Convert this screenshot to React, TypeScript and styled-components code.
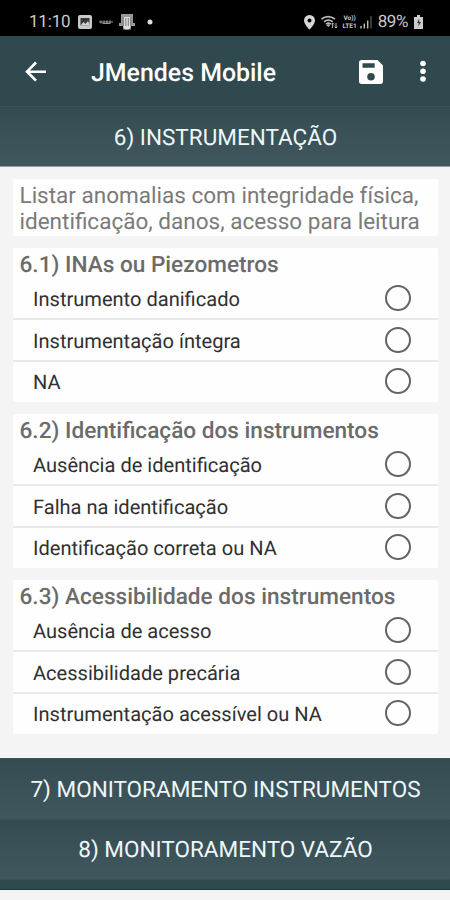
import React from 'react';
import styled, { createGlobalStyle } from 'styled-components';

const GlobalStyle = createGlobalStyle`
  * { box-sizing: border-box; }
  html, body { margin: 0; padding: 0; background: #f4f4f4; }
  body { font-family: Roboto, "Liberation Sans", sans-serif; text-rendering: geometricPrecision; }
`;

const Screen = styled.div`
  width: 450px;
  height: 900px;
  overflow: hidden;
  display: flex;
  flex-direction: column;
  background: #f4f4f4;
`;

const StatusBar = styled.header`
  height: 36px;
  flex: none;
  display: flex;
  justify-content: space-between;
  padding: 8px 27px 0 29px;
  background: #000;
  color: #c9c9c9;
`;

const StatusGroup = styled.div`
  display: flex;
  align-items: center;
  height: 28px;
`;

const StatusText = styled.span<{ $spacing: number }>`
  font-size: 17px;
  line-height: 28px;
  letter-spacing: ${(p) => p.$spacing}px;
  white-space: nowrap;
`;

const StatusIcon = styled.svg<{ $gap: number }>`
  display: block;
  flex: none;
  margin-left: ${(p) => p.$gap}px;
`;

const Battery = styled.span`
  margin-left: 6px;
`;

const AppBar = styled.div`
  height: 70px;
  flex: none;
  display: flex;
  align-items: center;
  padding: 1px 22px 0 24px;
  background: #30494f;
  color: #fff;
`;

const Title = styled.h1`
  flex: 1;
  margin: 3px 0 0 43px;
  font-size: 24.9px;
  font-weight: 500;
  white-space: nowrap;
`;

const BarIcon = styled.svg<{ $gap?: number }>`
  display: block;
  flex: none;
  margin-left: ${(p) => p.$gap ?? 0}px;
`;

const SectionButton = styled.button<{ $height: number; $drop: number }>`
  display: block;
  width: 100%;
  height: ${(p) => p.$height}px;
  flex: none;
  margin: 0;
  padding: ${(p) => p.$drop}px 0 0 1px;
  border: 0;
  border-top: 1px solid #3b545a;
  background: linear-gradient(#334c52, #40575d);
  color: #eef7fb;
  font: 400 22.5px Roboto, "Liberation Sans", sans-serif;
  text-rendering: inherit;
  text-align: center;
  white-space: nowrap;
`;

const Content = styled.main`
  flex: none;
  height: 592px;
  display: flex;
  flex-direction: column;
  gap: 11.5px;
  padding: 12px 12px 0 13px;
  border-top: 1px solid #8fa1a5;
`;

const Card = styled.section`
  flex: none;
  background: #fefefe;
  border-radius: 2px;
`;

const Description = styled(Card)`
  height: 57px;
  padding: 4px 0 0 6.5px;
  font-size: 22.52px;
  line-height: 26px;
  color: #7a7a7a;
`;

const DescriptionLine = styled.div`
  white-space: nowrap;
`;

const Question = styled(Card)`
  height: 154.5px;
`;

const QuestionTitle = styled.h2`
  height: 31px;
  margin: 0;
  padding-left: 6.5px;
  font-size: 22.62px;
  line-height: 34px;
  font-weight: 500;
  color: #6b6b6b;
  white-space: nowrap;
`;

const Option = styled.label`
  height: 41.5px;
  display: flex;
  align-items: center;
  justify-content: space-between;
  padding: 0 27px 0 20px;
  border-bottom: 2px solid #e9e9e9;

  &:last-child { border-bottom-color: transparent; }
`;

const OptionText = styled.span`
  padding-top: 1.5px;
  font-size: 20.07px;
  line-height: 24px;
  color: #303030;
  white-space: nowrap;
`;

const Radio = styled.span`
  width: 26px;
  height: 26px;
  flex: none;
  border: 2px solid #646464;
  border-radius: 50%;
`;

const Footer = styled.div`
  height: 11px;
  flex: none;
  background: #30494f;
  border-top: 1px solid #3b545a;
  border-bottom: 1px solid #173b42;
`;

const VolteText = styled.span`
  display: flex;
  flex-direction: column;
  margin-left: 3px;
  width: 18px;
  font-size: 6.5px;
  font-weight: 700;
  line-height: 8px;
  text-align: center;
  white-space: nowrap;
`;

type Group = { title: string; options: string[] };

const groups: Group[] = [
  {
    title: '6.1) INAs ou Piezometros',
    options: ['Instrumento danificado', 'Instrumentação íntegra', 'NA'],
  },
  {
    title: '6.2) Identificação dos instrumentos',
    options: ['Ausência de identificação', 'Falha na identificação', 'Identificação correta ou NA'],
  },
  {
    title: '6.3) Acessibilidade dos instrumentos',
    options: ['Ausência de acesso', 'Acessibilidade precária', 'Instrumentação acessível ou NA'],
  },
];

export default function App() {
  return (
    <Screen>
      <GlobalStyle />
      <StatusBar>
        <StatusGroup>
          <StatusText $spacing={-0.2}>11:10</StatusText>
          <StatusIcon $gap={8} width="14" height="14" viewBox="0 0 14 14">
            <rect width="14" height="14" rx="2" fill="#c9c9c9" />
            <rect x="2.5" y="3" width="9" height="7.5" fill="#383838" />
            <path d="M2.5 10.5 5.5 7l2 2L10 6l2 4.5z" fill="#d4d4d4" />
          </StatusIcon>
          <StatusIcon $gap={7} width="14" height="6" viewBox="0 0 14 6">
            <path d="M0 3h14M2 1.2v3.2M5 1.5v3M8 1.2v3.3M11 1.3v3M3.5 4.5h8" stroke="#929292" strokeWidth="1.2" fill="none" />
          </StatusIcon>
          <StatusIcon $gap={6} width="16" height="16" viewBox="0 0 16 16">
            <path d="M2 0h12v9h2v3h-4v3.5H4V12H0V9h2z" fill="#999" />
            <path d="M4.5 3h7v10l-2 2.5H6L4.5 13z" fill="#dedede" />
            <path d="M4.2 3v9M11.8 3v9M6.8 4v8M9.3 4v8" stroke="#606060" strokeWidth=".8" />
          </StatusIcon>
          <StatusIcon $gap={12} width="6" height="6" viewBox="0 0 6 6">
            <circle cx="3" cy="3" r="2.5" fill="#ddd" />
          </StatusIcon>
        </StatusGroup>
        <StatusGroup>
          <StatusIcon $gap={0} width="11" height="15" viewBox="0 0 11 15">
            <path fillRule="evenodd" d="M5.5 0A5.4 5.4 0 0 0 0 5.4C0 9.3 5.5 14.5 5.5 14.5S11 9.3 11 5.4A5.4 5.4 0 0 0 5.5 0m0 3.6a2 2 0 1 1 0 4 2 2 0 0 1 0-4" fill="#d5d5d5" />
          </StatusIcon>
          <StatusIcon $gap={6} width="17" height="14" viewBox="0 0 17 14">
            <path d="M.5 4Q7 -.8 14 4M3 6.7q4.2-3 8.7 0M5 9.2q2.4-2 4.7 0" fill="none" stroke="#b9b9b9" strokeWidth="1.7" />
            <path d="m7.3 12-2-2q2-1.5 4 0z" fill="#b9b9b9" />
            <path d="M11.6 8v5m-1.5-3.5L11.6 8l1.5 1.5M15 13V8m-1.5 3.5L15 13l1.5-1.5" stroke="#b9b9b9" fill="none" />
          </StatusIcon>
          <VolteText>
            <span>Vo))</span>
            <span>LTE1</span>
          </VolteText>
          <StatusIcon $gap={1} width="12" height="14" viewBox="0 0 12 14">
            <path d="M1 11v2.5M4.3 8.5v5M7.7 5.5v8" stroke="#b8b8b8" strokeWidth="1.5" />
            <path d="M11 1v12.5" stroke="#555" strokeWidth="1.3" />
          </StatusIcon>
          <Battery>
            <StatusText $spacing={-0.4}>89%</StatusText>
          </Battery>
          <StatusIcon $gap={6} width="9" height="14" viewBox="0 0 9 14">
            <path d="M3 0h3v2h3v12H0V2h3z" fill="#ccc" />
            <path d="M5.2 3.8 3 8h1.7l-.5 3.5L7 7H5.2z" fill="#303030" />
          </StatusIcon>
        </StatusGroup>
      </StatusBar>

      <AppBar>
        <BarIcon width="24" height="24" viewBox="0 0 24 24" aria-label="Voltar">
          <path d="M22 11.7H3.5M12 2.5 3 11.7l9 9" fill="none" stroke="#fff" strokeWidth="2.6" />
        </BarIcon>
        <Title>JMendes Mobile</Title>
        <BarIcon width="24" height="24" viewBox="0 0 24 24" aria-label="Salvar">
          <path fillRule="evenodd" d="M2.8 0H18.5L24 5.5v15.8A2.7 2.7 0 0 1 21.3 24H2.8A2.8 2.8 0 0 1 0 21.2V2.8A2.8 2.8 0 0 1 2.8 0M3.5 3.2v4.6h12.2V3.2zM12 13a3.8 3.8 0 1 0 0 7.6 3.8 3.8 0 0 0 0-7.6" fill="#fff" />
        </BarIcon>
        <BarIcon $gap={35} width="10" height="24" viewBox="0 0 10 24" aria-label="Menu">
          <circle cx="5" cy="3.5" r="2.8" fill="#fff" />
          <circle cx="5" cy="11.3" r="2.8" fill="#fff" />
          <circle cx="5" cy="19" r="2.8" fill="#fff" />
        </BarIcon>
      </AppBar>
      <SectionButton $height={60} $drop={2}>6) INSTRUMENTAÇÃO</SectionButton>

      <Content>
        <Description>
          <DescriptionLine>Listar anomalias com integridade física,</DescriptionLine>
          <DescriptionLine>identificação, danos, acesso para leitura</DescriptionLine>
        </Description>
        {groups.map((group) => (
          <Question key={group.title}>
            <QuestionTitle>{group.title}</QuestionTitle>
            {group.options.map((option) => (
              <Option key={option}>
                <OptionText>{option}</OptionText>
                <Radio />
              </Option>
            ))}
          </Question>
        ))}
      </Content>

      <SectionButton $height={61} $drop={2}>7) MONITORAMENTO INSTRUMENTOS</SectionButton>
      <SectionButton $height={60} $drop={0}>8) MONITORAMENTO VAZÃO</SectionButton>
      <Footer />
    </Screen>
  );
}
